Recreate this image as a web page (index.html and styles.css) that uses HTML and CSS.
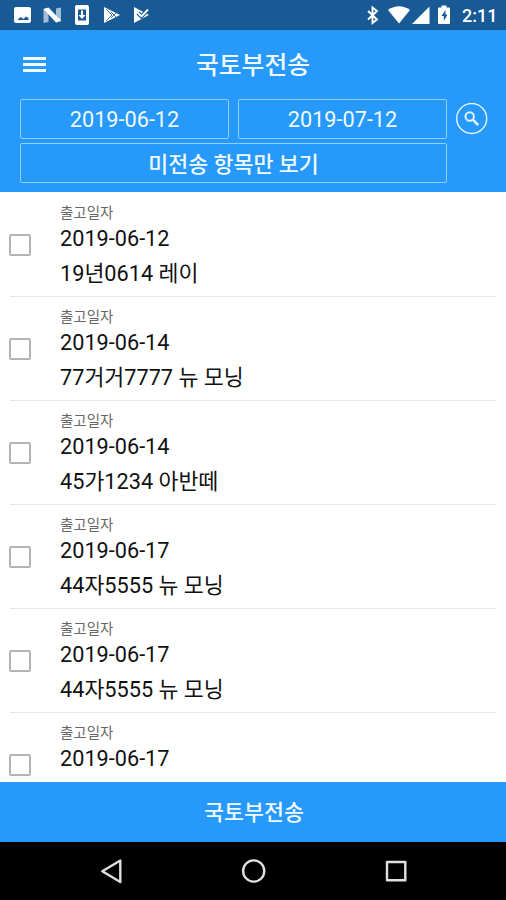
FILE: index.html
```html
<!DOCTYPE html>
<html lang="ko">
<head>
    <meta charset="utf-8">
    <title>국토부전송</title>
    <link rel="stylesheet" href="styles.css">
</head>
<body>
    <div class="statusbar">
        <svg width="160" height="30" viewBox="0 0 160 30" fill="#fff">
            <path fill-rule="evenodd" d="M16 7h13a2 2 0 0 1 2 2v12a2 2 0 0 1-2 2H16a2 2 0 0 1-2-2V9a2 2 0 0 1 2-2zM17.500 20h11v-2L26 16.500l-2.500 2.500-3-2z"/>
            <path opacity=".6" d="M43.500 9l5-1v14l-5 1zM56 8.500l5-1v14l-5 1z"/>
            <path d="M43.500 9l5-1.500 12.500 13-5 2z"/>
            <path fill-rule="evenodd" d="M77 5h10a2 2 0 0 1 2 2v16a2 2 0 0 1-2 2H77a2 2 0 0 1-2-2V7a2 2 0 0 1 2-2zM78 9.500v11h8v-11z"/>
            <path d="M81 10.500h2v4.500h2.500L82 19l-3.500-4H81z"/>
            <path d="M104 7l16 8-16 8z"/>
            <path d="M106 9l6 6-6 6M111 12l5 5M111 18l5-5" stroke="#175a95" stroke-width=".8" fill="none"/>
            <path d="M134 7l15 8-15 8z"/>
            <path d="M138 13l3.500 3.500L149 8" stroke="#175a95" stroke-width="4" fill="none"/>
            <path d="M138 13l3.500 3.500L148 9.500" stroke="#fff" stroke-width="1.900" fill="none"/>
        </svg>
        <div class="status-right">
            <svg width="86" height="30" viewBox="0 0 86 30" fill="#fff">
                <path d="M3 11l9 8.500-4.500 3.500V7.500l4.500 3.500-9 8.500" fill="none" stroke="#fff" stroke-width="1.900"/>
                <path d="M23 10q11-7.500 22 0L34 23.500z"/>
                <path d="M64.500 6.500V24H47z"/>
                <path fill-rule="evenodd" d="M74 7.500h2.500V5.500h5v2H84a1 1 0 0 1 1 1V23a1 1 0 0 1-1 1H74a1 1 0 0 1-1-1V8.500a1 1 0 0 1 1-1zM80.500 10l-4 6h2.300v5l3.700-6.500h-2z"/>
            </svg>
            <span class="clock">2:11</span>
        </div>
    </div>

    <div class="header">
        <div class="titlebar">
            <div class="menu"><i></i><i></i><i></i></div>
            <h1>국토부전송</h1>
        </div>
        <div class="filters">
            <button class="date">2019-06-12</button>
            <button class="date">2019-07-12</button>
            <button class="search">
                <svg width="32" height="32" viewBox="0 0 32 32" fill="none" stroke="#e4f4ff">
                    <circle cx="15.700" cy="15.500" r="15" stroke-width="1.400"/>
                    <circle cx="13.700" cy="13.500" r="4.200" stroke-width="2"/>
                    <path d="M16.800 16.600l5.400 5.400" stroke-width="2.500"/>
                </svg>
            </button>
            <button class="unsent">미전송 항목만 보기</button>
        </div>
    </div>

    <div class="list">
        <div class="item">
            <span class="check"></span>
            <div>
                <p class="label">출고일자</p>
                <p class="day">2019-06-12</p>
                <p class="car">19년0614 레이</p>
            </div>
        </div>
        <div class="item">
            <span class="check"></span>
            <div>
                <p class="label">출고일자</p>
                <p class="day">2019-06-14</p>
                <p class="car">77거거7777 뉴 모닝</p>
            </div>
        </div>
        <div class="item">
            <span class="check"></span>
            <div>
                <p class="label">출고일자</p>
                <p class="day">2019-06-14</p>
                <p class="car">45가1234 아반떼</p>
            </div>
        </div>
        <div class="item">
            <span class="check"></span>
            <div>
                <p class="label">출고일자</p>
                <p class="day">2019-06-17</p>
                <p class="car">44자5555 뉴 모닝</p>
            </div>
        </div>
        <div class="item">
            <span class="check"></span>
            <div>
                <p class="label">출고일자</p>
                <p class="day">2019-06-17</p>
                <p class="car">44자5555 뉴 모닝</p>
            </div>
        </div>
        <div class="item">
            <span class="check"></span>
            <div>
                <p class="label">출고일자</p>
                <p class="day">2019-06-17</p>
            </div>
        </div>
    </div>

    <button class="send">국토부전송</button>

    <div class="navbar">
        <svg width="506" height="58" viewBox="0 0 506 58" fill="none" stroke="#e0e0e0" stroke-width="2.400" stroke-linejoin="round">
            <path d="M120.300 18.500v21.500l-18-10.800z"/>
            <circle cx="253.700" cy="29" r="10.600"/>
            <rect x="387" y="20" width="18.300" height="18.300"/>
        </svg>
    </div>
</body>
</html>
```
FILE: styles.css
```css
* { box-sizing: border-box; }
body { margin: 0; height: 900px; display: flex; flex-direction: column; overflow: hidden; background: #fff; font-family: Roboto, "Noto Sans CJK KR", sans-serif; }
svg { display: block; }
p, h1 { margin: 0; }
button { padding: 0; border: none; background: none; color: #f0f9ff; font-family: inherit; font-size: 21.7px; }

.statusbar { flex: none; height: 30px; display: flex; justify-content: space-between; background: #175a95; color: #fff; }
.status-right { display: flex; align-items: center; padding-right: 10px; }
.clock { width: 34px; margin-left: 11px; line-height: 30px; padding-top: 2px; font-size: 18px; font-weight: 500; white-space: nowrap; }

.header { flex: none; height: 162px; background: #2699fb; }
.titlebar { display: grid; grid-template-columns: 60px 1fr 60px; height: 69px; align-items: center; }
.titlebar h1 { padding-top: 3px; color: #f0f9ff; font-size: 24.8px; font-weight: 500; line-height: 36px; text-align: center; }
.menu { display: flex; flex-direction: column; gap: 3px; padding-left: 23px; }
.menu i { width: 23px; height: 3px; background: #f0f9ff; }

.filters { display: grid; grid-template-columns: 209px 209px 32px; grid-template-rows: 40px 40px; gap: 4px 9px; padding-left: 20px; align-items: center; }
.date, .unsent { height: 40px; border: 1px solid #8fd0ff; border-radius: 2px; line-height: 36px; }
.date { padding-top: 2px; }
.unsent { grid-column: span 2; padding-top: 3px; font-weight: 500; }

.list { flex: none; height: 590px; padding: 1px 10px 0; overflow: hidden; }
.item { display: flex; height: 104px; border-bottom: 1px solid #e8e8e8; }
.check { width: 22px; height: 22px; margin: 41px 28px 0 -1px; border: 2px solid #b4b4b4; border-radius: 2px; }
.item p { margin-left: 1px; white-space: nowrap; }
.label { padding-top: 10px; color: #666; font-size: 14.5px; line-height: 21px; }
.day, .car { color: #111; font-size: 21.7px; line-height: 30px; }
.car { padding-top: 5px; }

.send { flex: none; height: 60px; padding: 0 0 3px 2px; background: #2699fb; font-weight: 500; }
.navbar { flex: none; height: 58px; background: #000; }
```
